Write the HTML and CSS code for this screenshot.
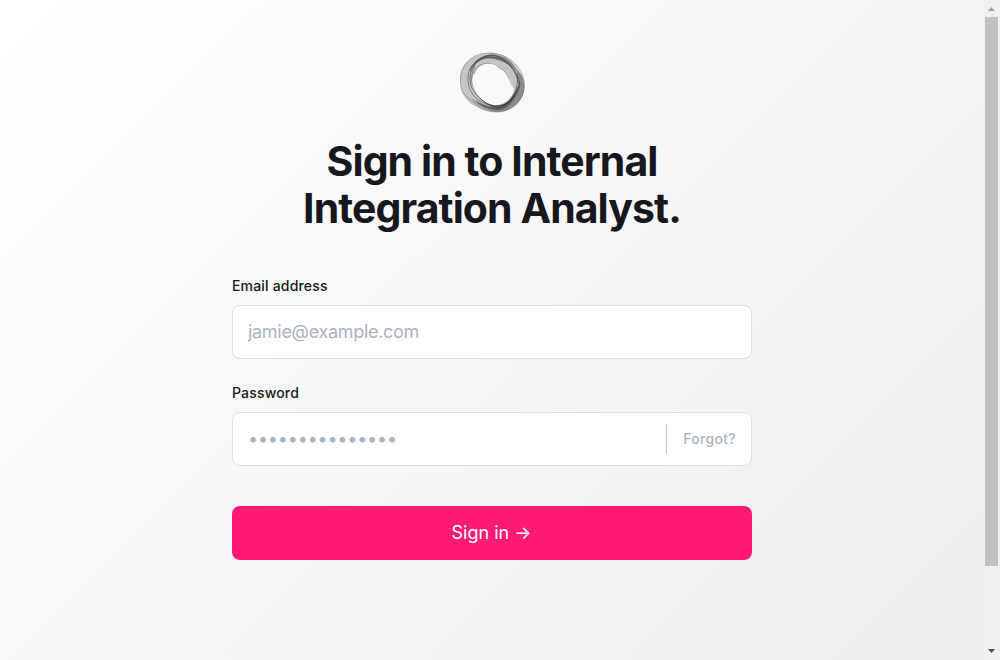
FILE: index.html
```html
<!DOCTYPE html>
<html lang="en">
<head>
<meta charset="utf-8">
<title>Sign in</title>
<link rel="stylesheet" href="styles.css">
</head>
<body>
<div class="window">
  <main class="page">
    <svg class="logo" viewBox="0 0 86 80" width="86" height="80" aria-hidden="true">
      <path fill="#777" fill-opacity=".4" fill-rule="evenodd" d="M10.5 37C10 23 22 12 39 11C54 10 66 20 72 33C77 48 73 60 62 66C51 72 36 71 25 64C15 59 10 49 10.5 37ZM22 38C20 51 31 62 46 63.500C57 62 65 52 64 45C60 38 57 30 51 27C47 25 45 20 40 22C33 20 25 26 22 38Z"/>
      <path fill="#444" fill-opacity=".45" fill-rule="evenodd" d="M66 27C71 32 74 36 74 42C76 53 67 65 54 69C42 72 28 65 20 55C30 63 41 67 51 64C59 61 66 53 69 42C69 37 68 31 66 27Z"/>
      <path fill="#333" fill-opacity=".45" d="M20 27C26 15 36 11 47 13C57 15 64 21 68 31C60 22 49 17 41 17C31 16 25 21 20 30Z M25 58C34 64 45 66 54 62C60 58 65 52 68 43C68 54 61 64 52 68C41 69 31 65 25 58Z"/>
      <g fill="none" stroke="#222" stroke-width=".8">
        <path stroke-opacity=".4" d="M10.5 38C10 22 23 11 39 11C57 11 73 24 74.500 42C75 58 62 70 47 70C31 70 25 61 17 55C11 50 10.500 45 10.500 38Z"/>
        <path stroke-opacity=".6" d="M18 38C17 25 27 16 39 15C54 15 68 27 70 43C68 55 57 64 45 64C30 62 19 54 18 38Z"/>
        <path stroke-opacity=".7" d="M20 35C21 23 31 13 43 13C57 16 66 28 69 43C65 55 58 64 48 66C34 62 19 51 20 35Z"/>
        <path stroke-opacity=".6" d="M25 24C18 37 22 52 36 61C43 65 56 66 61 57C65 51 69 42 67 31"/>
        <path stroke-opacity=".4" d="M24 32C27 20 39 21 43 22C47 22 49 27 53 28C58 32 59 39 64 46"/>
      </g>
    </svg>
    <h1 class="title">Sign in to Internal<br>Integration Analyst.</h1>
    <form class="form">
      <label class="label" for="email">Email address</label>
      <div class="field"><input class="input" id="email" type="email" placeholder="jamie@example.com"></div>
      <label class="label" for="password">Password</label>
      <div class="field">
        <input class="input password" id="password" type="password" placeholder="•••••••••••••••">
        <a class="forgot">Forgot?</a>
      </div>
      <button class="submit" type="button">Sign in →</button>
    </form>
  </main>
  <div class="scrollbar">
    <svg class="arrow" viewBox="0 0 15 17" width="15" height="17"><path fill="#a0a0a0" d="M3 11L6.5 7L10 11Z"/></svg>
    <div class="thumb"></div>
    <svg class="arrow" viewBox="0 0 15 17" width="15" height="17"><path fill="#505050" d="M3 6L6.5 10L10 6Z"/></svg>
  </div>
</div>
</body>
</html>
```
FILE: styles.css
```css
* { box-sizing: border-box; }
body {
  margin: 0;
  overflow: hidden;
  font-family: Inter, sans-serif;
  color: #16181d;
}
.window {
  display: flex;
  height: 660px;
  background: linear-gradient(135deg, #fff, #ededed) 0 0 / 985px 752px no-repeat;
}
.page {
  display: flex;
  flex-direction: column;
  align-items: center;
  width: 984px;
  padding-top: 42px;
}
.logo { display: block; margin-left: 2px; }
.title {
  margin: 16px 0 0;
  font-size: 41px;
  line-height: 47px;
  font-weight: 700;
  letter-spacing: -0.92px;
  text-align: center;
}
.form { width: 520px; padding-top: 45px; }
.label {
  display: block;
  height: 18px;
  margin-bottom: 10px;
  font-size: 14px;
  line-height: 18px;
  font-weight: 500;
  letter-spacing: 0.18px;
}
.field {
  display: flex;
  align-items: center;
  height: 54px;
  margin-bottom: 25px;
  background: #fff;
  border: 1px solid #dedfe0;
  border-radius: 8px;
}
.input {
  flex: 1;
  min-width: 0;
  height: 52px;
  padding: 0 15px 2px;
  border: 0;
  outline: 0;
  background: transparent;
  font: 400 18px Inter, sans-serif;
  letter-spacing: -0.3px;
}
.password { letter-spacing: -0.2px; }
.input::placeholder { color: #a9b3bf; opacity: 1; }
.forgot {
  display: flex;
  align-items: center;
  height: 30px;
  padding: 0 15px 2px 16px;
  border-left: 1px solid #c4c5c7;
  font-size: 14px;
  font-weight: 500;
  letter-spacing: 0.3px;
  color: #a9b3bf;
}
.submit {
  display: block;
  width: 520px;
  height: 54px;
  margin-top: 40px;
  padding: 0 1px 2px 0;
  border: 0;
  border-radius: 8px;
  background: #ff1a75;
  color: #fff;
  font: 400 18px Inter, sans-serif;
}
.scrollbar {
  display: flex;
  flex-direction: column;
  justify-content: space-between;
  width: 16px;
  padding-left: 1px;
  background: #f0f0f0;
}
.arrow { display: block; flex: none; }
.thumb { width: 13px; height: 549px; margin-bottom: auto; background: #c1c1c1; }
```
